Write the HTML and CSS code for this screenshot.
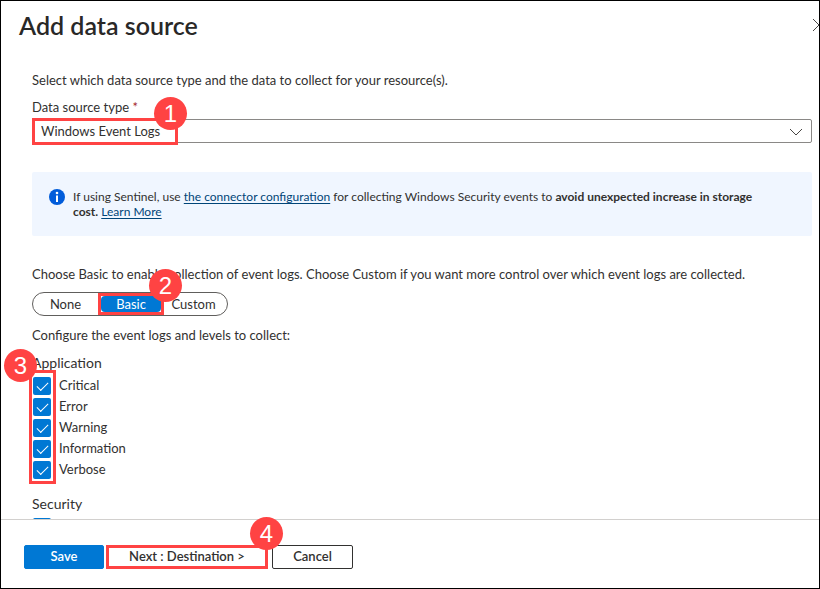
FILE: index.html
```html
<!DOCTYPE html>
<html lang="en">
<head>
<meta charset="utf-8">
<title>Add data source</title>
<link rel="stylesheet" href="styles.css">
</head>
<body>
<div class="panel">
  <header class="header">
    <h1 class="title">Add data source</h1>
    <button class="close" type="button" aria-label="Close">
      <svg width="14" height="14" viewBox="0 0 14 14"><path d="M1 1l12 12M13 1L1 13"/></svg>
    </button>
  </header>

  <main class="content">
    <p class="text">Select which data source type and the data to collect for your resource(s).</p>
    <label class="text" for="source-type">Data source type <span class="required">*</span></label>
    <div class="dropdown">
      <select id="source-type" class="select">
        <option>Windows Event Logs</option>
      </select>
      <svg class="chevron" width="14" height="8" viewBox="0 0 14 8"><path d="M1 1l6 6 6-6"/></svg>
      <span class="frame frame-source"></span>
      <span class="step step-one">1</span>
    </div>

    <div class="notice">
      <svg class="info" width="16" height="16" viewBox="0 0 16 16"><circle cx="8" cy="8" r="8" fill="#015cda"/><circle cx="8" cy="4" r="1.3" fill="#fff"/><path d="M7 6.5h2V13H7z" fill="#fff"/></svg>
      <p class="notice-text">If using Sentinel, use <a href="#connector">the connector configuration</a> for collecting Windows Security events to <b>avoid unexpected increase in storage cost.</b> <a href="#learn">Learn More</a></p>
    </div>

    <p class="text">Choose Basic to enable collection of event logs. Choose Custom if you want more control over which event logs are collected.</p>
    <div class="pills">
      <button class="pill pill-none" type="button">None</button>
      <button class="pill pill-basic" type="button" aria-pressed="true"><span class="pill-fill">Basic</span></button>
      <button class="pill pill-custom" type="button">Custom</button>
      <span class="step step-two">2</span>
    </div>
    <p class="text">Configure the event logs and levels to collect:</p>

    <section class="group">
      <h2 class="group-title">Application</h2>
      <div class="checks">
        <label class="check"><input type="checkbox" checked>Critical</label>
        <label class="check"><input type="checkbox" checked>Error</label>
        <label class="check"><input type="checkbox" checked>Warning</label>
        <label class="check"><input type="checkbox" checked>Information</label>
        <label class="check"><input type="checkbox" checked>Verbose</label>
        <span class="frame frame-checks"></span>
        <span class="step step-three">3</span>
      </div>
    </section>
    <section class="group">
      <h2 class="group-title">Security</h2>
      <div class="checks">
        <label class="check"><input type="checkbox" checked aria-label="Audit success"></label>
      </div>
    </section>
  </main>

  <footer class="footer">
    <button class="button button-save" type="button">Save</button>
    <div class="next">
      <button class="button button-next" type="button">Next : Destination &gt;</button>
      <span class="step step-four">4</span>
    </div>
    <button class="button button-cancel" type="button">Cancel</button>
  </footer>
</div>
</body>
</html>
```
FILE: styles.css
```css
* { box-sizing: border-box; }

body {
  margin: 0;
  font-family: "Segoe UI", Lato, "Open Sans", sans-serif;
  font-size: 13px;
  line-height: 20px;
  color: #323130;
  background: #fff;
}

button, select, input { font: inherit; color: inherit; margin: 0; }
h1, h2, p { margin: 0; }

.panel {
  height: 100vh;
  display: flex;
  flex-direction: column;
  border: 1px solid #000;
  overflow: hidden;
}

.header {
  flex: none;
  display: flex;
  justify-content: space-between;
  align-items: center;
  height: 48px;
  padding-left: 18px;
}

.title { font-size: 25px; line-height: 32px; font-weight: 600; color: #292827; }

.close {
  flex: none;
  width: 14px;
  height: 14px;
  margin-right: -7px;
  padding: 0;
  border: 0;
  background: none;
}

.close svg { display: block; }
.close path, .chevron path { fill: none; stroke: #484644; }

.content {
  flex: 1;
  min-height: 0;
  overflow: hidden;
  padding: 21px 7px 0 31px;
}

.text { display: block; white-space: nowrap; }
label.text { margin-top: 7px; }
.required { color: #a4262c; }

.dropdown { position: relative; margin-top: 2px; }

.select {
  display: block;
  appearance: none;
  width: 100%;
  height: 24px;
  padding: 0 32px 0 8px;
  border: 1px solid #8a8886;
  border-radius: 2px;
  background: #fff;
}

.chevron { position: absolute; right: 9px; top: 9px; pointer-events: none; }

.frame { position: absolute; border: 3px solid #ff4343; pointer-events: none; }
.frame-source { left: 0; top: -1px; width: 146px; height: 27px; }
.frame-checks { left: -3px; top: -3px; width: 27px; height: 114px; }

.step {
  position: absolute;
  z-index: 2;
  width: 33px;
  height: 33px;
  border-radius: 50%;
  background: #ff4343;
  color: #fff;
  font: 24px/33px "Liberation Sans", Arial, sans-serif;
  text-align: center;
}

.step-one { left: 122px; top: -22px; }
.step-two { left: 116px; top: -24px; }
.step-three { left: -28px; top: -24px; }
.step-four { left: 144px; top: -28px; }

.notice {
  display: flex;
  gap: 8px;
  min-height: 64px;
  margin: 29px 0 28px;
  padding: 17px 40px 17px 17px;
  border-radius: 2px;
  background: #f0f6ff;
}

.info { flex: none; }
.notice-text { font-size: 12px; line-height: 15px; }
.notice a { color: #004578; text-underline-offset: 2px; }
.notice b { font-weight: 700; }

.pills {
  position: relative;
  display: flex;
  width: 196px;
  height: 24px;
  margin: 8px 0 9px;
  border: 1px solid #605e5c;
  border-radius: 12px;
}

.pill { padding: 0; border: 0; background: none; line-height: 20px; }
.pill-none { width: 65px; }
.pill-basic {
  width: 66px;
  height: 22px;
  border: 3px solid #ff4343;
  background: #fff;
  color: #fff;
  line-height: 16px;
}
.pill-fill { display: block; border-radius: 4px; background: #0078d4; }
.pill-custom { flex: 1; padding-right: 4px; }

.group { margin-top: 8px; }
.group + .group { margin-top: 12px; }
.group-title { font-size: 14px; line-height: 20px; font-weight: 400; }
.checks { position: relative; padding-top: 4px; }
.check {
  display: flex;
  align-items: flex-start;
  gap: 8px;
  height: 21px;
  padding-left: 1px;
  line-height: 16px;
}

.check input {
  appearance: none;
  flex: none;
  width: 18px;
  height: 18px;
  border-radius: 2px;
  background: #0078d4;
  display: grid;
  place-items: center;
}

.check input::before {
  content: "";
  width: 10px;
  height: 5px;
  margin-top: -2px;
  border: solid #fff;
  border-width: 0 0 1px 1px;
  transform: rotate(-45deg);
}

.footer {
  flex: none;
  display: flex;
  align-items: flex-start;
  padding: 25px 23px 19px;
  border-top: 1px solid #d2d0ce;
}

.button {
  height: 24px;
  padding: 0 0 2px;
  border: 1px solid #323130;
  border-radius: 2px;
  background: #fff;
  font-weight: 600;
  line-height: 20px;
}

.button-save { width: 80px; border-color: #0078d4; background: #0078d4; color: #fff; }
.next { position: relative; margin: 0 4px 0 2px; }
.button-next { width: 162px; border: 3px solid #ff4343; border-radius: 0; line-height: 16px; }
.button-cancel { width: 81px; }
```
